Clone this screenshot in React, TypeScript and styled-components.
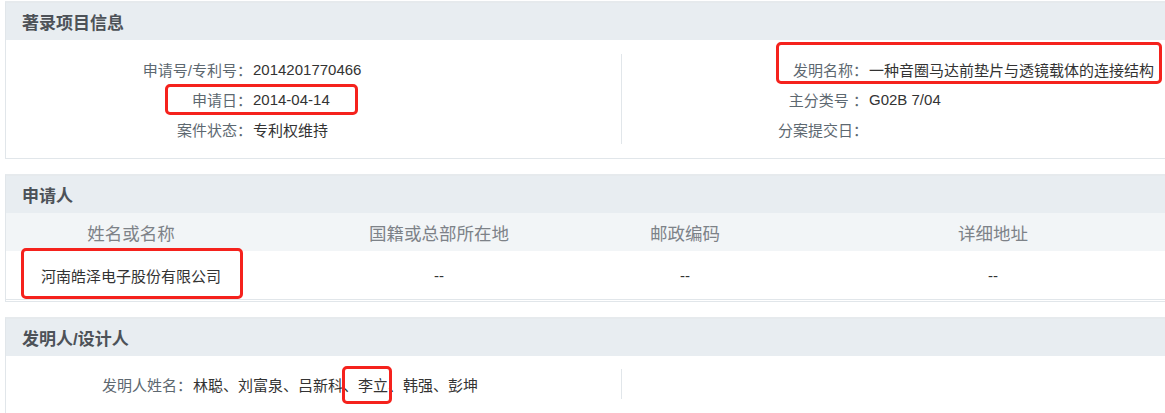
import styled, { createGlobalStyle } from "styled-components"

const GlobalStyle = createGlobalStyle`
  html, body {
    margin: 0;
    padding: 0;
    background: #fff;
    overflow: hidden;
  }
  body {
    font-family: "Liberation Sans", "Noto Sans CJK SC", sans-serif;
    font-size: 15px;
    color: #333;
  }
`

const Page = styled.div`
  position: relative;
  width: 1165px;
  height: 413px;
  overflow: hidden;
  padding: 1px 0 0 5px;
  box-sizing: border-box;
`

const Panel = styled.section`
  width: 1232px;
  border: 1px solid #e1e6ea;
  border-top: 2px solid #e6eaed;
  margin-bottom: 15px;
  background: #fff;
`

const PanelHeader = styled.div`
  height: 37px;
  display: flex;
  align-items: center;
  padding-left: 16px;
  background: #e8edf1;
  font-size: 17px;
  font-weight: bold;
  color: #4d5258;
`

const InfoBody = styled.div<{ $pad: number; $padBottom?: number }>`
  display: flex;
  padding: ${(p) => p.$pad}px 0 ${(p) => p.$padBottom ?? p.$pad}px;
`

const Half = styled.div<{ $divider?: boolean }>`
  width: 615px;
  border-right: ${(p) => (p.$divider ? "1px solid #e1e6ea" : "none")};
`

const InfoRow = styled.div`
  display: flex;
  height: 30px;
  align-items: center;
`

const Label = styled.span<{ $width: number }>`
  width: ${(p) => p.$width}px;
  flex: none;
  text-align: right;
  color: #5d6870;
  white-space: nowrap;
`

const Value = styled.span`
  padding-left: 1px;
  color: #333;
  white-space: nowrap;
`

const Grid = styled.div`
  display: grid;
  grid-template-columns: 250px 366px 126px 1fr;
`

const HeadCell = styled.div`
  height: 38px;
  display: flex;
  align-items: center;
  justify-content: center;
  background: #f2f5f7;
  font-size: 17.5px;
  color: #7d8288;
  white-space: nowrap;
`

const DataCell = styled.div`
  height: 48px;
  display: flex;
  align-items: center;
  justify-content: center;
  border-bottom: 1px solid #e1e6ea;
  margin-bottom: 1px;
  color: #333;
  white-space: nowrap;
`

const Mark = styled.div`
  position: absolute;
  border: 3px solid #f5221d;
  border-radius: 5px;
  box-sizing: border-box;
  pointer-events: none;
`

type Item = { label: string; value?: string }

const leftInfo: Item[] = [
  { label: "申请号/专利号：", value: "2014201770466" },
  { label: "申请日：", value: "2014-04-14" },
  { label: "案件状态：", value: "专利权维持" },
]

const rightInfo: Item[] = [
  { label: "发明名称：", value: "一种音圈马达前垫片与透镜载体的连接结构" },
  { label: "主分类号 ：", value: "G02B 7/04" },
  { label: "分案提交日：" },
]

const inventorInfo: Item[] = [
  { label: "发明人姓名：", value: "林聪、刘富泉、吕新科、李立、韩强、彭坤" },
]

const applicantCols = ["姓名或名称", "国籍或总部所在地", "邮政编码", "详细地址"]
const applicantRow = ["河南皓泽电子股份有限公司", "--", "--", "--"]

const marks = [
  { left: 165, top: 84, width: 193, height: 31 },
  { left: 776, top: 42, width: 386, height: 42 },
  { left: 21, top: 248, width: 222, height: 51 },
  { left: 342, top: 366, width: 50, height: 38 },
]

const InfoList = ({ items, labelWidth }: { items: Item[]; labelWidth: number }) => (
  <>
    {items.map((it) => (
      <InfoRow key={it.label}>
        <Label $width={labelWidth}>{it.label}</Label>
        <Value>{it.value}</Value>
      </InfoRow>
    ))}
  </>
)

const App = () => {
  return (
    <Page>
      <GlobalStyle />
      <Panel>
        <PanelHeader>著录项目信息</PanelHeader>
        <InfoBody $pad={14}>
          <Half $divider>
            <InfoList items={leftInfo} labelWidth={246} />
          </Half>
          <Half>
            <InfoList items={rightInfo} labelWidth={246} />
          </Half>
        </InfoBody>
      </Panel>

      <Panel>
        <PanelHeader>申请人</PanelHeader>
        <Grid>
          {applicantCols.map((c) => (
            <HeadCell key={c}>{c}</HeadCell>
          ))}
          {applicantRow.map((v, i) => (
            <DataCell key={i}>{v}</DataCell>
          ))}
        </Grid>
      </Panel>

      <Panel>
        <PanelHeader>发明人/设计人</PanelHeader>
        <InfoBody $pad={13} $padBottom={20}>
          <Half $divider>
            <InfoList items={inventorInfo} labelWidth={186} />
          </Half>
          <Half />
        </InfoBody>
      </Panel>

      {marks.map((m, i) => (
        <Mark key={i} style={{ left: m.left, top: m.top, width: m.width, height: m.height }} />
      ))}
    </Page>
  )
}

export default App
